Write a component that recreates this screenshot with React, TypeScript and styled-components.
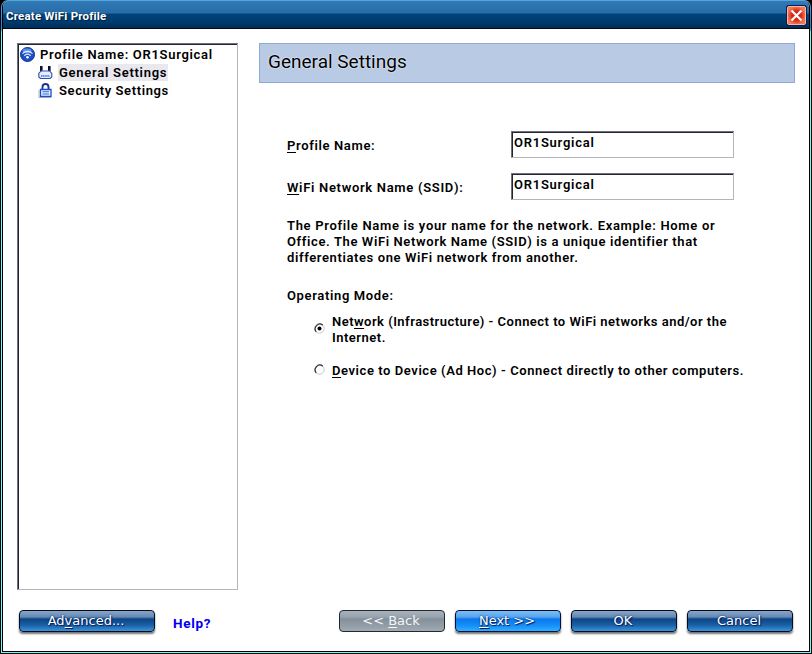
import React from 'react';
import styled, { createGlobalStyle } from 'styled-components';

const Global = createGlobalStyle`
  * { box-sizing: border-box; }
  html, body { margin: 0; padding: 0; background: #000; overflow: hidden; }
  body { font-family: Roboto, "Liberation Sans", sans-serif; font-size: 13px; font-weight: 600; color: #000; }
`;

const Frame = styled.div`
  width: 812px;
  height: 654px;
  background: #000;
  padding: 0 1px 1px;
`;

const Rim = styled.div`
  height: 653px;
  padding: 1px 1px;
  border-radius: 7px 7px 0 0;
  background: linear-gradient(#5aa5dc 0, #2f7fbd 28px, #6ff 32px);
`;

const Window = styled.div`
  display: flex;
  flex-direction: column;
  height: 651px;
  border: solid #000;
  border-width: 0 1px 1px;
  border-radius: 6px 6px 0 0;
  overflow: hidden;
  background: #fff;
`;

const TitleBar = styled.div`
  display: flex;
  align-items: center;
  justify-content: space-between;
  height: 28px;
  flex: none;
  padding: 0 2px 0 3px;
  border-bottom: 1px solid #000814;
  background: linear-gradient(#2f7ab8 0, #2a6ca6 12px, #00457e 13px, #00396b 22px, #002c58 27px);
`;

const Title = styled.div`
  padding-top: 3px;
  font-size: 11.5px;
  font-weight: 700;
  line-height: 14px;
  letter-spacing: 0.2px;
  color: #fff;
  text-shadow: 1px 1px 1px #001c40;
  white-space: nowrap;
`;

const CloseButton = styled.button`
  display: block;
  width: 21px;
  height: 21px;
  margin-top: 1px;
  padding: 0;
  border: 0;
  background: none;
`;

const Body = styled.div`
  display: flex;
  flex: 1;
  padding: 14px 14px 0 14px;
  gap: 21px;
`;

const Tree = styled.div`
  width: 221px;
  height: 547px;
  padding: 1px 0 0 1px;
  border: 1px solid;
  border-color: #70707c #b4b4bc #b4b4bc #70707c;
  box-shadow: inset 1px 1px 0 #25252f;
`;

const TreeRow = styled.div<{ $level: number }>`
  display: flex;
  align-items: center;
  height: 18px;
  padding-left: ${p => p.$level * 18 + 1}px;
  gap: ${p => 4 + p.$level}px;
  svg { flex: none; }
`;

const TreeLabel = styled.span<{ $on?: boolean; $ls: number }>`
  padding: 0 1px;
  line-height: 17px;
  background: ${p => (p.$on ? '#e9e8ee' : 'transparent')};
  letter-spacing: ${p => p.$ls}px;
  white-space: nowrap;
`;

const Panel = styled.div`
  width: 536px;
`;

const Banner = styled.div`
  display: flex;
  align-items: center;
  height: 40px;
  padding: 0 0 3px 8px;
  border: 1px solid #8fa9d3;
  background: #b8cae4;
  font-size: 19px;
  font-weight: 400;
  text-shadow: 0 0 2px #eef6ff, 0 0 1px #eef6ff;
`;

const Form = styled.div`
  padding: 48px 0 0 28px;
`;

const Field = styled.label`
  display: flex;
  align-items: center;
  height: 27px;
  margin-bottom: 15px;
`;

const FieldName = styled.span`
  width: 224px;
  padding-top: 2px;
`;

const Line = styled.span<{ $ls: number }>`
  display: inline-block;
  letter-spacing: ${p => p.$ls}px;
  line-height: 16px;
  white-space: nowrap;
  u { text-underline-offset: 2px; text-decoration-thickness: 1px; text-decoration-skip-ink: none; }
`;

const Input = styled.span`
  width: 223px;
  height: 27px;
  padding: 3px 0 0 2px;
  border: 1px solid;
  border-color: #70707c #b4b4bc #b4b4bc #70707c;
  box-shadow: inset 1px 1px 0 #25252f;
`;

const Paragraph = styled.div`
  display: flex;
  flex-direction: column;
  align-items: flex-start;
`;

const Description = styled(Paragraph)`
  margin-top: 18px;
`;

const ModeTitle = styled.div`
  margin: 22px 0 10px;
  height: 16px;
`;

const Option = styled.div`
  display: flex;
  align-items: center;
  gap: 7px;
  padding-left: 27px;
  margin-bottom: 17px;
  > svg { margin-bottom: 3px; }
`;

const Footer = styled.div`
  display: flex;
  height: 41px;
  flex: none;
  padding: 0 16px;
  gap: 10px;
`;

const tones = {
  blue: ['#8aa5c6', '#6489b5', '#0c4585', '#195fa4', '#3b93dc', '#000d20'],
  bright: ['#7cbcf4', '#58a5ee', '#0a78ea', '#158cf8', '#2fb0ff', '#00123c'],
  gray: ['#a9b2ba', '#98a3ac', '#84909b', '#919ca5', '#a2abb2', '#202938'],
};

const Button = styled.button<{ $w: number; $tone: keyof typeof tones }>`
  width: ${p => p.$w}px;
  height: 22px;
  padding: 0 2px 0 0;
  border: 1px solid ${p => tones[p.$tone][5]};
  border-radius: 4px;
  background: linear-gradient(
    ${p => tones[p.$tone][0]} 0,
    ${p => tones[p.$tone][1]} 6px,
    ${p => tones[p.$tone][2]} 8px,
    ${p => tones[p.$tone][3]} 14px,
    ${p => tones[p.$tone][4]} 20px
  );
  box-shadow: ${p => (p.$tone === 'gray' ? 'none' : '0 2px 2px rgba(0,0,0,.55)')};
  color: ${p => (p.$tone === 'gray' ? '#f4f6f8' : '#fff')};
  text-shadow: ${p => (p.$tone === 'gray' ? 'none' : '0 0 2px #002060, 1px 1px 1px #002060')};
  font: 400 13px/20px "DejaVu Sans", sans-serif;
  white-space: nowrap;
  u { text-underline-offset: 2px; text-decoration-thickness: 1px; }
`;

const Help = styled.a`
  width: 38px;
  margin: 5px 118px 0 8px;
  color: #0000f0;
  font-weight: 700;
  font-size: 13.5px;
  line-height: 16px;
  letter-spacing: 0.7px;
`;

const WifiIcon = () => (
  <svg width="15" height="15" viewBox="0 0 15 15">
    <circle cx="7.5" cy="7.5" r="7" fill="#1c4fc4" stroke="#0d2f96" />
    <ellipse cx="7" cy="4" rx="4.5" ry="2.4" fill="#5c93ea" />
    <path d="M2.5 6.6Q7.5 2 12.5 6.6M4.3 8.7Q7.5 5.7 10.7 8.7" fill="none" stroke="#e4f0ff" strokeWidth="1.2" />
    <circle cx="7.5" cy="10.3" r="1.3" fill="#fff" />
  </svg>
);

const RouterIcon = () => (
  <svg width="15" height="15" viewBox="0 0 15 15">
    <path d="M2 1h2.600v5.500H2zM10 1h2.600v5.500H10z" fill="#0c1030" />
    <path d="M3 6h8.600L13.800 8.500v3.500L12 13.500H2.500L.8 12V8.500z" fill="#e6eeff" stroke="#2d4cae" strokeWidth="1.100" />
    <path d="M3 11h8.800" stroke="#3f62e0" strokeWidth="1.300" strokeDasharray="1.500 .6" />
    <path d="M4.500 6h5.500" stroke="#93a7e5" />
  </svg>
);

const LockIcon = () => (
  <svg width="15" height="15" viewBox="0 0 15 15">
    <path d="M4.500 6.500V4Q4.500 1 7.500 1T10.500 4V6.500" fill="none" stroke="#1c348c" strokeWidth="1.900" />
    <path d="M2.500 6.500h10.500v7H2.500z" fill="#eaf3ff" stroke="#1c4cd0" strokeWidth="1.300" />
    <path d="M4.500 8.700h6.500M4.500 11h6.500" stroke="#2a68e8" strokeWidth="1.100" />
    <path d="M1 7v7.500h12" fill="none" stroke="#9c9ca8" strokeWidth=".8" />
  </svg>
);

const CloseIcon = () => (
  <svg width="21" height="21" viewBox="0 0 21 21">
    <defs>
      <radialGradient id="closeFill">
        <stop offset="0" stopColor="#d90f00" />
        <stop offset=".55" stopColor="#de2c14" />
        <stop offset="1" stopColor="#ee7a5c" />
      </radialGradient>
    </defs>
    <rect width="21" height="21" rx="3" fill="#00205e" />
    <rect x="1.500" y="1.500" width="18" height="18" rx="1.500" fill="url(#closeFill)" stroke="#ffb698" />
    <path d="M5.500 5.500l10 10M15.500 5.500l-10 10" stroke="#fff" strokeWidth="2.200" />
  </svg>
);

const Radio = ({ on }: { on?: boolean }) => (
  <svg width="11" height="11" viewBox="0 0 11 11">
    <circle cx="5.500" cy="5.500" r="4.700" fill="#fff" stroke="#c6c6d0" />
    <path d="M2.200 8.800A4.700 4.700 0 0 1 8.800 2.200" fill="none" stroke="#30303a" strokeWidth="1.200" />
    {on && <circle cx="5.500" cy="5.500" r="2" fill="#000" />}
  </svg>
);

export default function App() {
  return (
    <Frame>
      <Global />
      <Rim>
        <Window>
          <TitleBar>
            <Title>Create WiFi Profile</Title>
            <CloseButton aria-label="Close"><CloseIcon /></CloseButton>
          </TitleBar>
          <Body>
            <Tree>
              <TreeRow $level={0}><WifiIcon /><TreeLabel $ls={0.7}>Profile Name: OR1Surgical</TreeLabel></TreeRow>
              <TreeRow $level={1}><RouterIcon /><TreeLabel $on $ls={0.73}>General Settings</TreeLabel></TreeRow>
              <TreeRow $level={1}><LockIcon /><TreeLabel $ls={0.61}>Security Settings</TreeLabel></TreeRow>
            </Tree>
            <Panel>
              <Banner>General Settings</Banner>
              <Form>
                <Field>
                  <FieldName><Line $ls={0.65}><u>P</u>rofile Name:</Line></FieldName>
                  <Input><Line $ls={0.75}>OR1Surgical</Line></Input>
                </Field>
                <Field>
                  <FieldName><Line $ls={0.69}><u>W</u>iFi Network Name (SSID):</Line></FieldName>
                  <Input><Line $ls={0.75}>OR1Surgical</Line></Input>
                </Field>
                <Description>
                  <Line $ls={0.68}>The Profile Name is your name for the network. Example: Home or</Line>
                  <Line $ls={0.62}>Office. The WiFi Network Name (SSID) is a unique identifier that</Line>
                  <Line $ls={0.61}>differentiates one WiFi network from another.</Line>
                </Description>
                <ModeTitle><Line $ls={0.65}>Operating Mode:</Line></ModeTitle>
                <Option>
                  <Radio on />
                  <Paragraph>
                    <Line $ls={0.48}>Net<u>w</u>ork (Infrastructure) - Connect to WiFi networks and/or the</Line>
                    <Line $ls={0.5}>Internet.</Line>
                  </Paragraph>
                </Option>
                <Option>
                  <Radio />
                  <Line $ls={0.57}><u>D</u>evice to Device (Ad Hoc) - Connect directly to other computers.</Line>
                </Option>
              </Form>
            </Panel>
          </Body>
          <Footer>
            <Button $w={136} $tone="blue">Ad<u>v</u>anced...</Button>
            <Help>Help?</Help>
            <Button $w={106} $tone="gray">&lt;&lt; <u>B</u>ack</Button>
            <Button $w={106} $tone="bright"><u>N</u>ext &gt;&gt;</Button>
            <Button $w={106} $tone="blue">OK</Button>
            <Button $w={106} $tone="blue">Cancel</Button>
          </Footer>
        </Window>
      </Rim>
    </Frame>
  );
}
